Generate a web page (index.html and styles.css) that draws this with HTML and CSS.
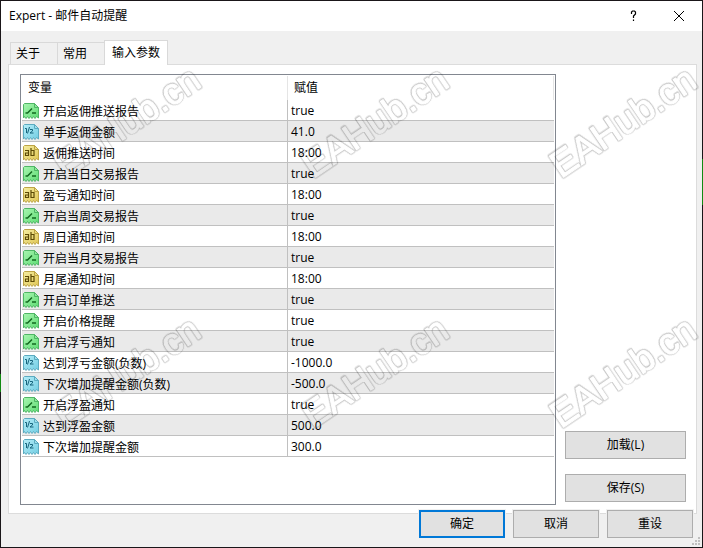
FILE: index.html
```
<!DOCTYPE html>
<html lang="zh-CN">
<head>
    <meta charset="UTF-8">
    <meta name="viewport" content="width=device-width, initial-scale=1.0">
    <title>Expert - 邮件自动提醒</title>
    <link rel="stylesheet" href="styles.css">
</head>
<body>

    <!-- Row icons -->
    <svg class="sprite" width="0" height="0" aria-hidden="true">
        <linearGradient id="fill-bool" x1="0" y1="0" x2="1" y2="1">
            <stop offset="0" stop-color="#a8f5b0"/><stop offset="1" stop-color="#5fdc74"/>
        </linearGradient>
        <linearGradient id="fill-num" x1="0" y1="0" x2="1" y2="1">
            <stop offset="0" stop-color="#b5edf8"/><stop offset="1" stop-color="#72cde2"/>
        </linearGradient>
        <linearGradient id="fill-str" x1="0" y1="0" x2="1" y2="1">
            <stop offset="0" stop-color="#f5eda0"/><stop offset="1" stop-color="#dfc655"/>
        </linearGradient>
        <symbol id="icon-bool" viewBox="0 0 16 16">
            <path d="M.5 1.500l1-1h10l4 4v10.500l-2-1.500-1.500 2-1.500-2-1.500 2-1.500-2-1.500 2-1.500-2-1.500 2-1.500-2-1 1.500z" fill="url(#fill-bool)" stroke="#4fb565"/>
            <path d="M11.500.5v4h4z" fill="#8fe79b" stroke="#4fb565"/>
            <path d="M2.500 10h2L9 5.500M9 10h4" fill="none" stroke="#12691f" stroke-width="1.500"/>
        </symbol>
        <symbol id="icon-num" viewBox="0 0 16 16">
            <path d="M.5 1.500l1-1h10l4 4v10.500l-2-1.500-1.500 2-1.500-2-1.500 2-1.500-2-1.500 2-1.500-2-1.500 2-1.500-2-1 1.500z" fill="url(#fill-num)" stroke="#5cabc0"/>
            <path d="M11.500.5v4h4z" fill="#a0dfed" stroke="#5cabc0"/>
            <path d="M2 4.500h1.500V9M6.500 3l-2 6.500M7 5.500h2.500v1.500l-2.500 2h3.500" fill="none" stroke="#17657d"/>
        </symbol>
        <symbol id="icon-str" viewBox="0 0 16 16">
            <path d="M.5 1.500l1-1h10l4 4v10.500l-2-1.500-1.500 2-1.500-2-1.500 2-1.500-2-1.500 2-1.500-2-1.500 2-1.500-2-1 1.500z" fill="url(#fill-str)" stroke="#bda445"/>
            <path d="M11.500.5v4h4z" fill="#eddd80" stroke="#bda445"/>
            <path d="M2 5.500h3.500V11M5.500 8h-3v2.500h3M8 3v8M8 5.500h3v5H8" fill="none" stroke="#5c4a05" stroke-width="1.200"/>
        </symbol>
    </svg>

    <div class="window">
        <header class="titlebar">
            <h1 class="title">Expert - 邮件自动提醒</h1>
            <button class="caption-btn" type="button" aria-label="帮助">
                <svg width="12" height="12" viewBox="0 0 12 12"><path d="M4.500 4V2l1-1h2l1 1v2L6.500 6v2M6.500 9.500V11" fill="none" stroke="#000" stroke-width="1.200"/></svg>
            </button>
            <button class="caption-btn" type="button" aria-label="关闭">
                <svg width="12" height="12" viewBox="0 0 12 12"><path d="M1 1l10 10M11 1L1 11" fill="none" stroke="#000"/></svg>
            </button>
        </header>

        <nav class="tabs" role="tablist">
            <button class="tab" type="button" role="tab">关于</button>
            <button class="tab" type="button" role="tab">常用</button>
            <button class="tab active" type="button" role="tab" aria-selected="true">输入参数</button>
        </nav>

        <main class="panel">
            <div class="list">
                <table class="params">
                    <thead>
                        <tr><th>变量</th><th>赋值</th></tr>
                    </thead>
                    <tbody>
                        <tr><td><svg class="icon"><use href="#icon-bool"/></svg>开启返佣推送报告</td><td>true</td></tr>
                        <tr><td><svg class="icon"><use href="#icon-num"/></svg>单手返佣金额</td><td>41.0</td></tr>
                        <tr><td><svg class="icon"><use href="#icon-str"/></svg>返佣推送时间</td><td>18:00</td></tr>
                        <tr><td><svg class="icon"><use href="#icon-bool"/></svg>开启当日交易报告</td><td>true</td></tr>
                        <tr><td><svg class="icon"><use href="#icon-str"/></svg>盈亏通知时间</td><td>18:00</td></tr>
                        <tr><td><svg class="icon"><use href="#icon-bool"/></svg>开启当周交易报告</td><td>true</td></tr>
                        <tr><td><svg class="icon"><use href="#icon-str"/></svg>周日通知时间</td><td>18:00</td></tr>
                        <tr><td><svg class="icon"><use href="#icon-bool"/></svg>开启当月交易报告</td><td>true</td></tr>
                        <tr><td><svg class="icon"><use href="#icon-str"/></svg>月尾通知时间</td><td>18:00</td></tr>
                        <tr><td><svg class="icon"><use href="#icon-bool"/></svg>开启订单推送</td><td>true</td></tr>
                        <tr><td><svg class="icon"><use href="#icon-bool"/></svg>开启价格提醒</td><td>true</td></tr>
                        <tr><td><svg class="icon"><use href="#icon-bool"/></svg>开启浮亏通知</td><td>true</td></tr>
                        <tr><td><svg class="icon"><use href="#icon-num"/></svg>达到浮亏金额(负数)</td><td>-1000.0</td></tr>
                        <tr><td><svg class="icon"><use href="#icon-num"/></svg>下次增加提醒金额(负数)</td><td>-500.0</td></tr>
                        <tr><td><svg class="icon"><use href="#icon-bool"/></svg>开启浮盈通知</td><td>true</td></tr>
                        <tr><td><svg class="icon"><use href="#icon-num"/></svg>达到浮盈金额</td><td>500.0</td></tr>
                        <tr><td><svg class="icon"><use href="#icon-num"/></svg>下次增加提醒金额</td><td>300.0</td></tr>
                    </tbody>
                </table>
            </div>
            <div class="side">
                <button class="btn" type="button">加载(L)</button>
                <button class="btn" type="button">保存(S)</button>
            </div>
        </main>

        <footer class="actions">
            <button class="btn primary" type="button">确定</button>
            <button class="btn" type="button">取消</button>
            <button class="btn" type="button">重设</button>
        </footer>

        <svg class="grip" width="8" height="8" viewBox="0 0 8 8" aria-hidden="true">
            <path d="M6 0h2v2H6zM3 3h2v2H3zM6 3h2v2H6zM0 6h2v2H0zM3 6h2v2H3zM6 6h2v2H6z" fill="#bfbfbf"/>
        </svg>
    </div>

    <!-- Watermark: a wide stroke with a narrower one cut out leaves a rounded outline -->
    <svg class="watermark">
        <defs>
            <g id="marks">
                <text transform="translate(65 179) rotate(-34)">EAHub.cn</text>
                <text transform="translate(313 179) rotate(-34)">EAHub.cn</text>
                <text transform="translate(561 179) rotate(-34)">EAHub.cn</text>
                <text transform="translate(65 429) rotate(-34)">EAHub.cn</text>
                <text transform="translate(313 429) rotate(-34)">EAHub.cn</text>
                <text transform="translate(561 429) rotate(-34)">EAHub.cn</text>
            </g>
            <mask id="cut" maskUnits="userSpaceOnUse" x="0" y="0" width="100%" height="100%">
                <rect width="100%" height="100%" fill="#fff"/>
                <use href="#marks" class="inner"/>
            </mask>
        </defs>
        <g class="marks" mask="url(#cut)">
            <use href="#marks" class="outer"/>
        </g>
    </svg>

</body>
</html>
```
FILE: styles.css
```
* {
    box-sizing: border-box;
}
body {
    margin: 0;
    font-family: "Open Sans", "Noto Sans CJK SC", sans-serif;
    font-size: 12px;
    line-height: 20px;
    color: #000;
}
button {
    font: inherit;
    color: inherit;
    padding: 0;
    border: none;
    background: none;
}
.sprite {
    position: absolute;
}
.window {
    position: relative;
    display: flex;
    flex-direction: column;
    min-height: 100vh;
    border: 1px solid transparent;
    background:
        linear-gradient(#f0f0f0, #f0f0f0) padding-box,
        linear-gradient(#128a12, #128a12) right 159px / 1px 46px no-repeat border-box,
        linear-gradient(#128a12, #128a12) left 374px / 1px 18px no-repeat border-box,
        linear-gradient(#1a1619, #1a1619) border-box;
}
.titlebar {
    display: flex;
    align-items: center;
    height: 30px;
    padding-left: 8px;
    background-color: #fff;
}
.title {
    flex: 1;
    margin: 0;
    font-size: 12px;
    font-weight: normal;
}
.caption-btn {
    display: grid;
    place-items: center;
    width: 46px;
    height: 30px;
}
.tabs {
    display: flex;
    align-items: flex-end;
    padding: 9px 9px 0;
}
.tab {
    height: 22px;
    padding: 0 17px 0 5px;
    border: 1px solid #d9d9d9;
    border-right: none;
    border-bottom: none;
}
.tab.active {
    position: relative;
    height: 25px;
    margin-bottom: -1px;
    padding: 0 7px;
    border-right: 1px solid #d9d9d9;
    background-color: #fff;
}
.panel {
    flex: 1;
    display: flex;
    gap: 9px;
    margin: 0 5px 0 7px;
    padding: 9px 10px 8px 11px;
    border: 1px solid #dcdcdc;
    background-color: #fff;
}
.list {
    flex: 1;
    padding: 1px;
    border: 1px solid #828790;
}
.params {
    width: 100%;
    table-layout: fixed;
    border-collapse: separate;
    border-spacing: 0;
}
.params th {
    height: 24px;
    padding: 0 6px;
    font-weight: normal;
    text-align: left;
    border-right: 1px solid #e5e5e5;
}
.params th:first-child {
    width: 50%;
}
.params td {
    height: 21px;
    padding: 2px 3px 0;
    line-height: 18px;
    border-bottom: 1px solid #c0c0c0;
}
.params td:first-child {
    padding: 3px 1px 0;
    line-height: 17px;
    border-right: 1px solid #c0c0c0;
}
.params tr:nth-child(even) td {
    background-color: #eaeaea;
}
.icon {
    width: 16px;
    height: 16px;
    margin-right: 4px;
    vertical-align: top;
}
.side {
    display: flex;
    flex-direction: column;
    justify-content: flex-end;
    gap: 15px;
    width: 121px;
    padding-bottom: 3px;
}
.btn {
    height: 28px;
    border: 1px solid #adadad;
    background-color: #e1e1e1;
}
.btn:hover {
    background-color: #e5f1fb;
}
.actions {
    position: relative;
    display: flex;
    justify-content: flex-end;
    gap: 8px;
    margin-top: -4px;
    padding: 0 9px 9px;
}
.actions .btn {
    width: 86px;
    box-shadow: 0 0 0 1px #f0f0f0;
}
.btn.primary {
    border: 2px solid #0078d7;
}
.grip {
    position: absolute;
    right: 2px;
    bottom: 2px;
}
.watermark {
    position: absolute;
    top: 0;
    left: 0;
    width: 100%;
    height: 100%;
    pointer-events: none;
    font-family: "Liberation Sans", sans-serif;
    font-size: 37px;
    stroke-linejoin: round;
}
.marks {
    opacity: 0.2;
}
.outer {
    stroke: #000;
    stroke-width: 3px;
}
.inner {
    stroke: #000;
    stroke-width: 1px;
}
```
